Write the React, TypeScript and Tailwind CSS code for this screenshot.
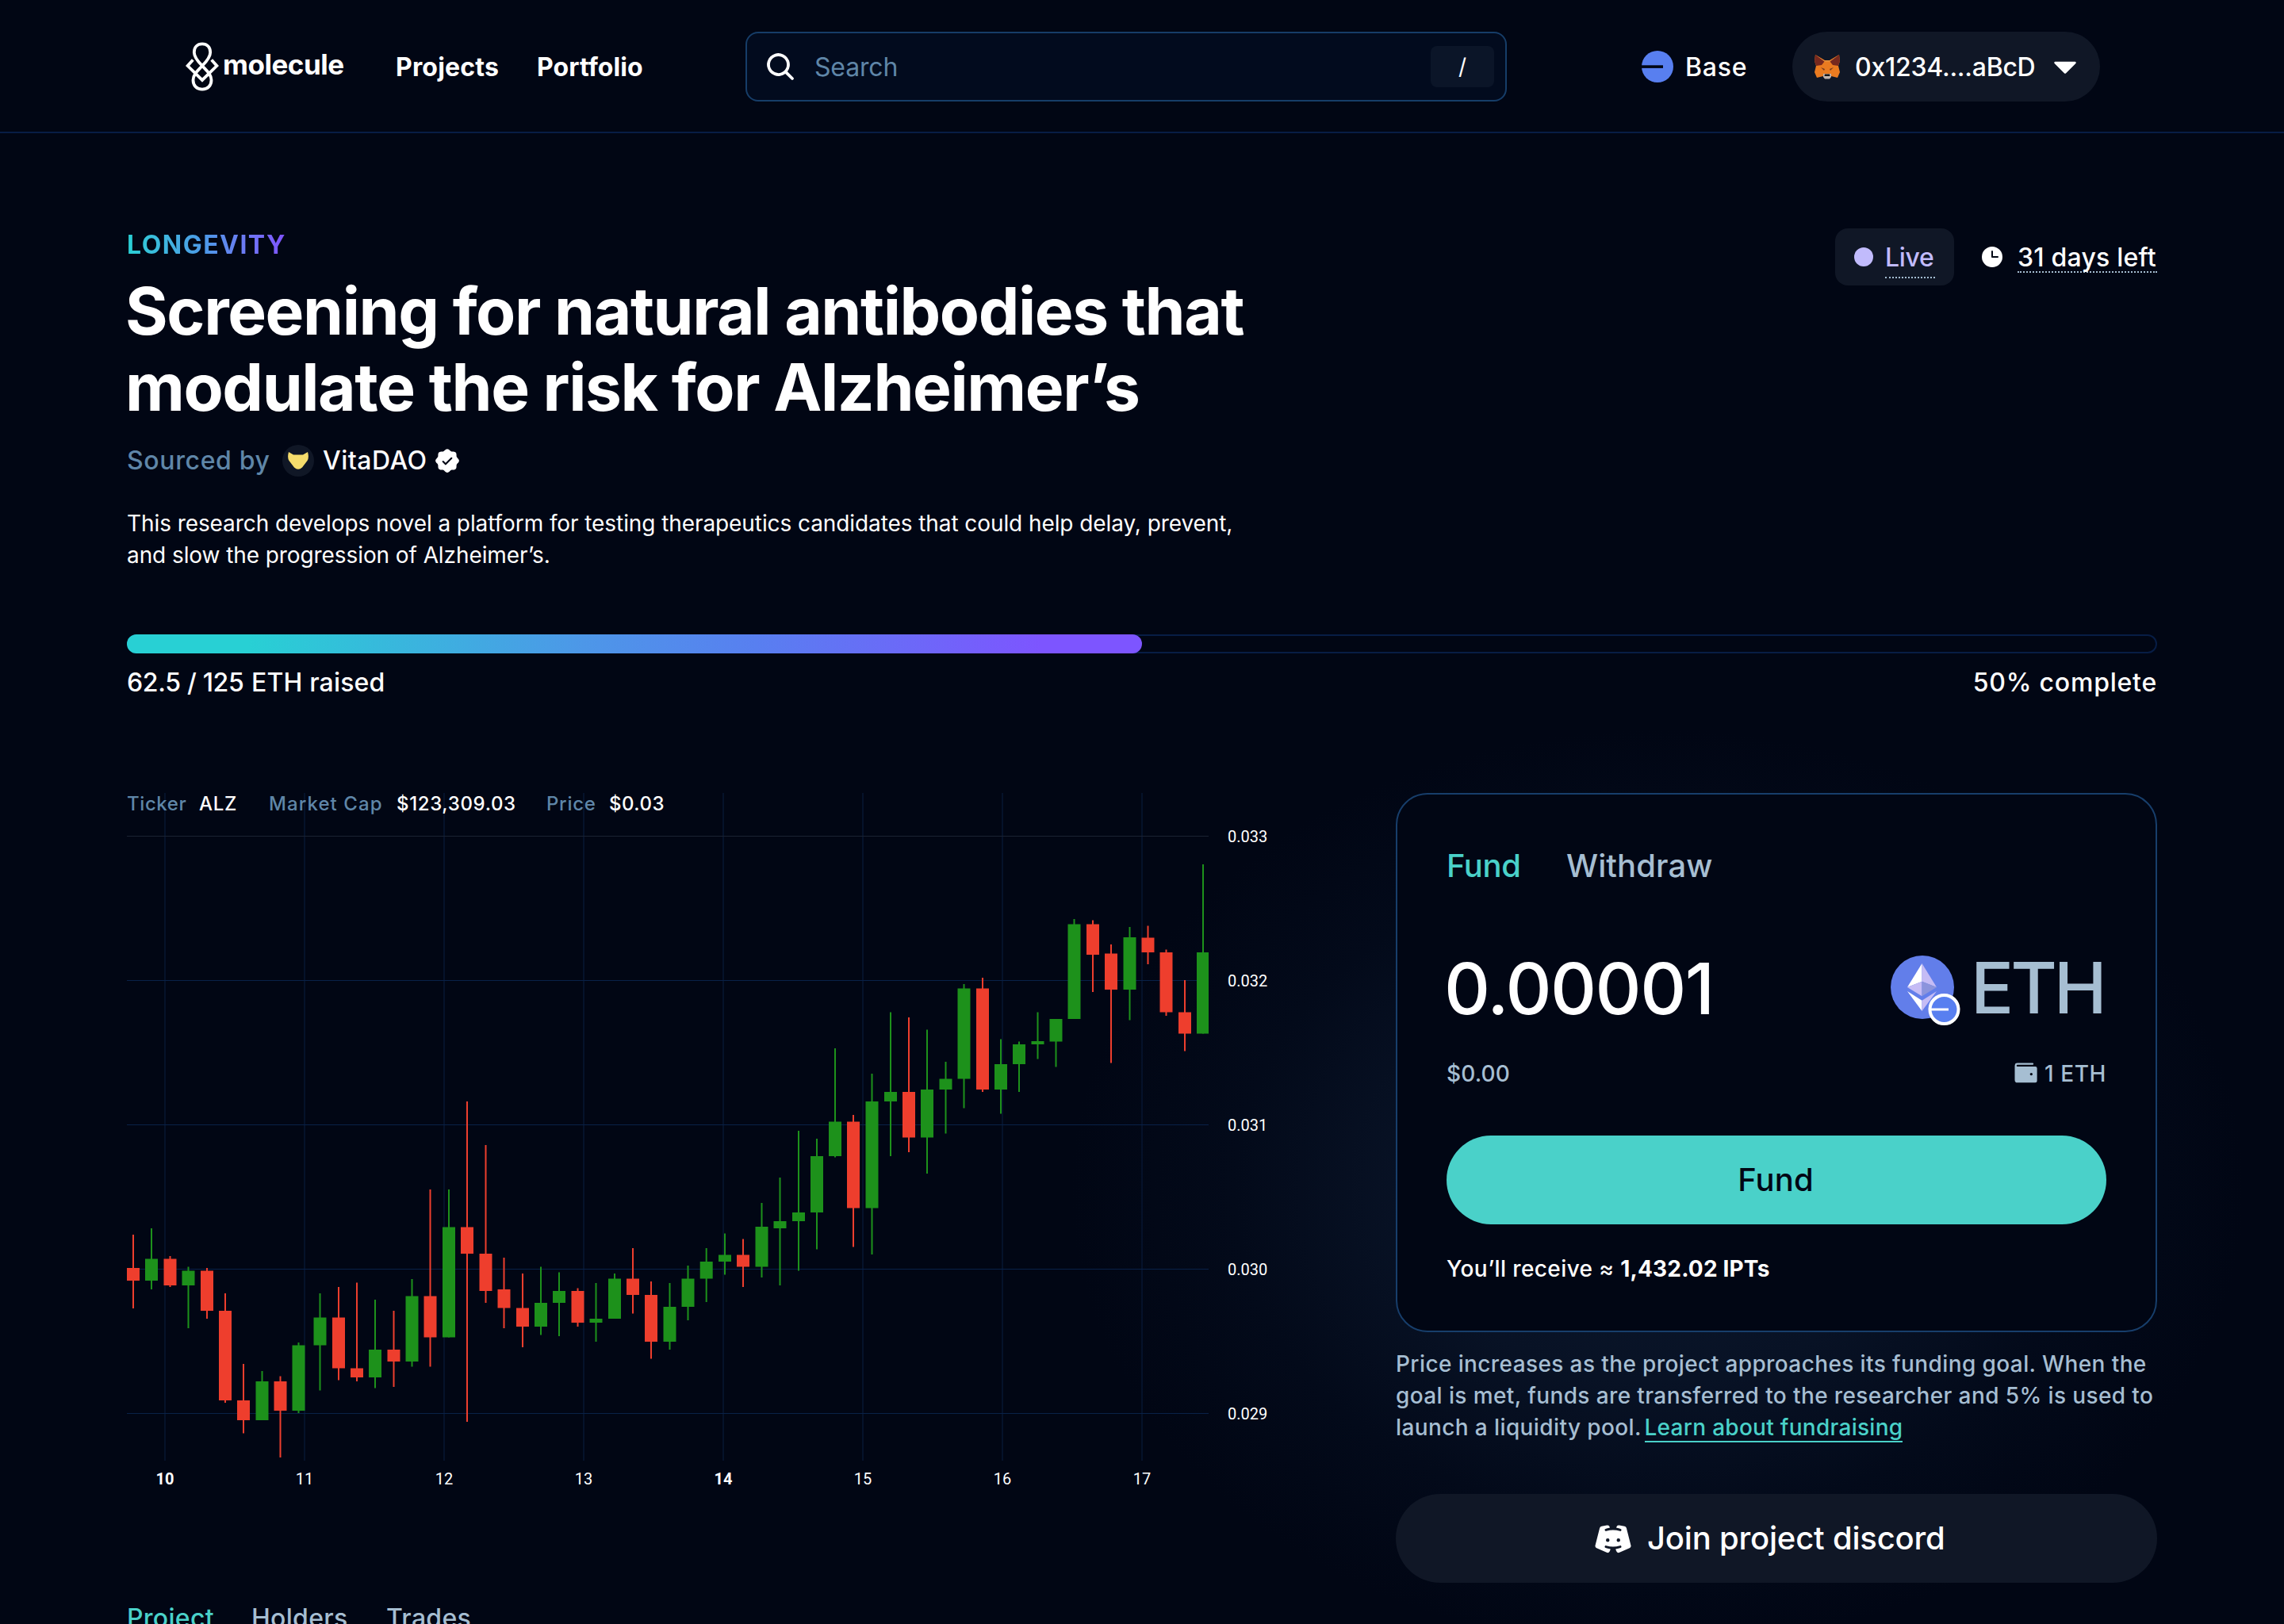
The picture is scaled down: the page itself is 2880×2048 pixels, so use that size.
import {
    PiCaretDownFill,
    PiClockFill,
    PiDiscordLogoFill,
    PiMagnifyingGlassBold,
    PiSealCheckFill,
    PiWalletFill,
} from "react-icons/pi";

type Candle = [x: number, high: number, top: number, bottom: number, low: number, up: 0 | 1];

// x centre, wick top, body top, body bottom, wick bottom, rising
const candles: Candle[] = [
    [168, 1557, 1599, 1615, 1650, 0],
    [191, 1549, 1587.5, 1615, 1626, 1],
    [214.5, 1584, 1587.5, 1621, 1623, 0],
    [237.5, 1597.5, 1602.5, 1621, 1675, 1],
    [261, 1599, 1602.5, 1653, 1663, 0],
    [284, 1631, 1653, 1766, 1769, 0],
    [307, 1720, 1766, 1791, 1807.5, 0],
    [330.5, 1729, 1742, 1791, 1791, 1],
    [353.5, 1735.5, 1742, 1779, 1838, 0],
    [376.5, 1693, 1696.5, 1779, 1782, 1],
    [403.5, 1631, 1661.5, 1696.5, 1753.5, 1],
    [427, 1623, 1661.5, 1725.5, 1740.5, 0],
    [450, 1617.5, 1725.5, 1737, 1742, 0],
    [473, 1639, 1702, 1737, 1750.5, 1],
    [496.5, 1653, 1702, 1717, 1749, 0],
    [519.5, 1613, 1634.5, 1717, 1723.5, 1],
    [542.5, 1500, 1634.5, 1686.5, 1723.5, 0],
    [566, 1500, 1547.5, 1686.5, 1686.5, 1],
    [589, 1389, 1547.5, 1581, 1793, 0],
    [612.5, 1444, 1581, 1628, 1643, 0],
    [635.5, 1586, 1626, 1649.5, 1675, 0],
    [659, 1606, 1649.5, 1673, 1699, 0],
    [682, 1597.5, 1643, 1673, 1683.5, 1],
    [705, 1604.5, 1628, 1643, 1685, 1],
    [728.5, 1624.5, 1628, 1668, 1673, 0],
    [751.5, 1618, 1663, 1668, 1692, 1],
    [775, 1606, 1612.5, 1663, 1663, 1],
    [798, 1574, 1612.5, 1633, 1656.5, 0],
    [821, 1616, 1633, 1692, 1713.5, 0],
    [844.5, 1618, 1648, 1692, 1702, 1],
    [867.5, 1596, 1612.5, 1648, 1665, 1],
    [890.7, 1574, 1591, 1612.5, 1642, 1],
    [914, 1555.5, 1582.5, 1591, 1607.5, 1],
    [937, 1562.5, 1582.5, 1597.5, 1623, 0],
    [960.5, 1517, 1547, 1597.5, 1611, 1],
    [983.5, 1485, 1540, 1549, 1621, 1],
    [1007, 1426, 1529, 1540, 1602.5, 1],
    [1030, 1436, 1458, 1529, 1575.5, 1],
    [1053, 1322, 1414.5, 1458, 1459.5, 1],
    [1076, 1406, 1414.5, 1523.5, 1572.5, 0],
    [1099.5, 1354, 1389, 1523.5, 1582, 1],
    [1123, 1276.5, 1377, 1389, 1458, 1],
    [1146, 1283, 1377, 1434.5, 1453, 0],
    [1169, 1298.5, 1374, 1434.5, 1480, 1],
    [1192.5, 1339, 1360.5, 1374, 1429.5, 1],
    [1215.5, 1241, 1246.5, 1360.5, 1397.5, 1],
    [1239, 1233, 1246.5, 1374, 1377, 0],
    [1262, 1310.5, 1342, 1374, 1404.5, 1],
    [1285, 1313.5, 1317, 1342, 1377, 1],
    [1308.5, 1276.5, 1313, 1317, 1335.5, 1],
    [1331.5, 1285, 1285, 1313.5, 1345.5, 1],
    [1354.5, 1159, 1165.5, 1285, 1285, 1],
    [1378, 1160.5, 1165.5, 1204, 1251, 0],
    [1401, 1191, 1202.5, 1248, 1340.5, 0],
    [1424.5, 1169, 1182, 1248, 1286.5, 1],
    [1447.5, 1167.5, 1182.5, 1201, 1216, 0],
    [1470.5, 1197.5, 1201, 1276.5, 1281, 0],
    [1494, 1236, 1276.5, 1303.5, 1325.5, 0],
    [1517, 1090, 1201, 1303.5, 1303.5, 1],
];

const prices = ["0.033", "0.032", "0.031", "0.030", "0.029"];
const days = ["10", "11", "12", "13", "14", "15", "16", "17"];

const MoleculeLogo = () => (
    <svg width="42" height="62" viewBox="0 0 42 62" fill="none" stroke="#fff" strokeWidth="3.8" className="shrink-0">
        <path d="M21 30C15.5 24.5 10.8 19 10.8 13C10.8 6.5 14.8 2.4 21 2.4C27.2 2.4 31.2 6.5 31.2 13C31.2 19 26.5 24.5 21 30C15 36.5 9.5 41 9.5 48C9.5 55 14 59.6 21 59.6C28 59.6 32.5 55 32.5 48C32.5 41 27 36.5 21 30Z" />
        <path d="M9.3 22.5L2.6 30L21 48L39.4 30L32.7 22.5" />
    </svg>
);

const BaseLogo = () => (
    <svg width="40" height="40" viewBox="0 0 40 40" className="shrink-0">
        <circle cx="20" cy="20" r="20" fill="#587ff0" />
        <rect x="0" y="18.3" width="27" height="3.6" fill="#010614" />
    </svg>
);

const Fox = () => (
    <svg width="34" height="32" viewBox="0 0 34 32" className="shrink-0">
        <path d="M2 1L14 8H20L32 1L33 9L31 15L33 23L30 30L22 28L20 31H14L12 28L4 30L1 23L3 15L1 9Z" fill="#ea7b20" />
        <path d="M2 1L14 9L10 14L3 15L1 9Z" fill="#76281e" />
        <path d="M32 1L20 9L24 14L31 15L33 9Z" fill="#76281e" />
        <path d="M2 1L13 8H21L32 1L20 10H14Z" fill="#e58a35" />
        <path d="M9 17L14 19L13 21Z" fill="#763a1c" />
        <path d="M25 17L20 19L21 21Z" fill="#763a1c" />
        <path d="M12 25H22V29L20 31.5H14L12 29Z" fill="#c0b4ad" />
        <path d="M14 25.5H20L20.5 28H13.5Z" fill="#161616" />
    </svg>
);

const EthLogo = () => (
    <svg width="90" height="90" viewBox="0 0 90 90" className="shrink-0">
        <circle cx="40" cy="40" r="40" fill="#627eea" />
        <path d="M39.5 10L21 40L39.5 32.7Z" fill="#fff" />
        <path d="M39.5 10L58 40L39.5 32.7Z" fill="#c5bcf5" />
        <path d="M39.5 32.7L21 40L39.5 51.3Z" fill="#c5bcf5" />
        <path d="M39.5 32.7L58 40L39.5 51.3Z" fill="#8b94dc" />
        <path d="M21 45L39.5 56.7V70Z" fill="#fff" />
        <path d="M58 45L39.5 56.7V70Z" fill="#c5bcf5" />
        <circle cx="67.5" cy="68" r="18" fill="#587ff0" stroke="#fff" strokeWidth="4" />
        <rect x="50" y="66.5" width="23" height="3" fill="#fff" />
    </svg>
);

const PriceChart = () => (
    <svg width="1480" height="880" viewBox="160 1000 1480 880" className="block" fontFamily="Roboto, sans-serif" fontSize="20" fill="#fff">
        {days.map((day, i) => (
            <g key={day}>
                <rect x={207 + i * 176} y="1000" width="2" height="842" fill="#05122a" />
                <text x={208 + i * 176} y="1872" textAnchor="middle" fontWeight={day === "10" || day === "14" ? 700 : 400}>
                    {day}
                </text>
            </g>
        ))}
        {prices.map((price, i) => (
            <g key={price}>
                <rect x="160" y={1054 + i * 182} width="1364" height="1" fill={i === 0 ? "#1b2232" : "#092148"} />
                <text x="1548" y={1061.5 + i * 182}>
                    {price}
                </text>
            </g>
        ))}
        {candles.map(([x, high, top, bottom, low, up]) => (
            <g key={x} fill={up ? "#1d911b" : "#ee3e2d"}>
                <rect x={x - 1} y={high} width="2" height={low - high} />
                <rect x={x - 8} y={top} width={x === 1517 ? 15 : 16} height={bottom - top} />
            </g>
        ))}
    </svg>
);

const Header = () => (
    <header className="flex h-[168px] items-center border-b-2 border-[#071d45] pt-0.5 pr-[232px] pl-[234px]">
        <div className="flex w-[706px] items-center">
            <MoleculeLogo />
            <span className="ml-[5px] w-[218px] pb-[5px] text-[35px] font-bold tracking-[-0.014em]">molecule</span>
            <nav className="flex pt-px text-[32px] font-bold">
                <a className="w-[178px] tracking-[0.006em]">Projects</a>
                <a className="tracking-[0.002em]">Portfolio</a>
            </nav>
        </div>
        <div className="flex h-[88px] w-[960px] items-center rounded-2xl border-2 border-[#163d68] bg-[#020b1e] pr-[14px] pl-[22px]">
            <PiMagnifyingGlassBold size={40} />
            <span className="ml-[23px] pt-px text-[32px] tracking-[-0.005em] text-[#5f86a8]">Search</span>
            <kbd className="ml-auto flex h-[52px] w-20 items-center justify-center rounded-lg bg-[#0b1528] font-[Inter] text-[28px]">/</kbd>
        </div>
        <div className="ml-auto flex items-center gap-14 text-[32px] font-medium">
            <div className="flex w-[134px] items-center">
                <BaseLogo />
                <span className="ml-[15px] pt-px tracking-[0.025em]">Base</span>
            </div>
            <div className="flex h-[88px] w-[388px] items-center rounded-full bg-[#101726] pl-[27px]">
                <Fox />
                <span className="ml-[18px] w-[245px] pt-px tracking-[-0.008em]">0x1234....aBcD</span>
                <PiCaretDownFill size={40} />
            </div>
        </div>
    </header>
);

const ProjectIntro = () => (
    <section className="flex items-start justify-between pt-[120px]">
        <div className="pt-px">
            <div className="w-[200px] bg-linear-to-r from-[#28d0d4] via-[#4d97e8] to-[#7f52ff] bg-clip-text text-[32px] leading-10 font-bold tracking-[0.046em] text-transparent">
                LONGEVITY
            </div>
            <h1 className="mt-4 -ml-[2px] text-[82px] leading-[96px] font-bold tracking-[-0.017em] whitespace-nowrap">
                Screening for natural antibodies that
                <br />
                modulate the risk for Alzheimer’s
            </h1>
            <div className="mt-6 flex h-10 items-center text-[32px] font-medium">
                <span className="w-[196px] tracking-[0.02em] text-[#5f86a8]">Sourced by</span>
                <span className="flex size-10 items-center justify-center rounded-full bg-[#101726]">
                    <svg width="28" height="24" viewBox="0 0 28 24">
                        <path d="M2 1L8 4.5H20L26 1Q28 8 25.5 12L19 20.5Q14 25 9 20.5L2.5 12Q0 8 2 1Z" fill="#f5dc6c" />
                    </svg>
                </span>
                <span className="ml-[11px] w-[140px] tracking-[0.016em]">VitaDAO</span>
                <PiSealCheckFill size={34} />
            </div>
            <p className="mt-[39px] text-[28px] leading-10 tracking-[-0.003em] whitespace-nowrap">
                This research develops novel a platform for testing therapeutics candidates that could help delay, prevent,
                <br />
                and slow the progression of Alzheimer’s.
            </p>
        </div>
        <div className="flex h-[72px] items-center text-[32px] leading-10 font-medium">
            <div className="flex h-[72px] w-[150px] items-center rounded-2xl bg-[#101726] pl-6 text-[#c1bbfc]">
                <span className="size-6 rounded-full bg-[#c1bbfc]" />
                <span className="ml-[15px] h-12 w-[63px] translate-y-[3px] border-b-2 border-dotted border-[#a5bdd1] pt-0.5 tracking-[-0.01em]">Live</span>
            </div>
            <PiClockFill size={32} className="ml-8" />
            <span className="ml-4 h-10 w-[176px] border-b-2 border-dotted border-[#a5bdd1] leading-[42px] tracking-[0.007em] whitespace-nowrap">31 days left</span>
        </div>
    </section>
);

const Progress = () => (
    <section className="mt-20">
        <div className="h-6 rounded-full border-2 border-[#071d45]">
            <div className="-m-0.5 h-6 w-[1280px] rounded-full bg-[linear-gradient(90deg,#28d0d4_0%,#28d0d4_12%,#4d97e8_45%,#587ff0_62%,#7d55ff_90%)]" />
        </div>
        <div className="mt-[17px] flex justify-between text-[32px] leading-10 font-medium">
            <span className="flex">
                <span className="w-[157px] tracking-[-0.01em]">62.5 / 125</span>
                <span className="tracking-[0.005em]">ETH raised</span>
            </span>
            <span className="tracking-[0.024em]">50% complete</span>
        </div>
    </section>
);

const FundCard = () => (
    <div className="h-[680px] rounded-[40px] border-2 border-[#173e6b] bg-[#010614] px-[62px] pt-[66px]">
        <div className="flex text-[40px] leading-[48px] font-medium">
            <span className="w-[151px] tracking-[-0.01em] text-[#4ad1c9]">Fund</span>
            <span className="tracking-[0.002em] text-[#a6bed2]">Withdraw</span>
        </div>
        <div className="mt-[82px] flex h-24 items-center text-[90px] leading-[96px] font-medium">
            <span className="-ml-[3px] pt-[2px] tracking-[-0.017em]">0.00001</span>
            <div className="ml-auto flex items-center">
                <div className="mt-2">
                    <EthLogo />
                </div>
                <span className="ml-[11px] w-[171px] tracking-[-0.046em] text-[#a6bed2]">ETH</span>
            </div>
        </div>
        <div className="mt-10 flex h-10 items-center justify-between text-[28px] leading-10 font-medium text-[#a6bed2]">
            <span className="tracking-[0.005em]">$0.00</span>
            <span className="flex items-center gap-1.5">
                <PiWalletFill size={36} />
                <span className="tracking-[0.02em]">1 ETH</span>
            </span>
        </div>
        <button className="mt-[58px] flex h-28 w-full items-center justify-center rounded-full bg-[#4ad1c9] pr-0.5 text-[40px] font-medium tracking-[0.003em] text-[#010614]">
            Fund
        </button>
        <p className="mt-9 text-[28px] leading-10 font-medium tracking-[0.014em]">
            You’ll receive ≈ <span className="font-bold tracking-[0.006em]">1,432.02 IPTs</span>
        </p>
    </div>
);

const App = () => {
    return (
        <div className="h-[2048px] w-[2880px] overflow-hidden bg-[#010614] bg-[radial-gradient(ellipse_740px_580px_at_2090px_1500px,#0c182d_0%,#081225_42%,#030a1a_72%,#010614_100%)] font-[Inter,sans-serif] text-white">
            <Header />
            <main className="px-40">
                <ProjectIntro />
                <Progress />
                <section className="mt-[119px] flex justify-between">
                    <div className="w-[1480px]">
                        <div className="relative">
                            <PriceChart />
                            <div className="absolute -top-[2px] left-0 flex text-[24px] leading-8 font-medium whitespace-nowrap">
                                <span className="w-[91px] tracking-[0.025em] text-[#5f86a8]">Ticker</span>
                                <span className="w-[88px] tracking-[0.03em]">ALZ</span>
                                <span className="w-[161px] tracking-[0.045em] text-[#5f86a8]">Market Cap</span>
                                <span className="w-[189px] tracking-[0.027em]">$123,309.03</span>
                                <span className="w-[79px] tracking-[0.03em] text-[#5f86a8]">Price</span>
                                <span className="tracking-[0.02em]">$0.03</span>
                            </div>
                        </div>
                        <div className="mt-[141px] flex text-[32px] leading-10 font-medium tracking-[0.009em] text-[#a6bed2]">
                            <span className="w-[157px] text-[#4ad1c9]">Project</span>
                            <span className="w-[170px]">Holders</span>
                            <span>Trades</span>
                        </div>
                    </div>
                    <aside className="w-[960px]">
                        <FundCard />
                        <p className="mt-5 text-[28px] leading-10 font-medium tracking-[0.014em] whitespace-nowrap text-[#a6bed2]">
                            Price increases as the project approaches its funding goal. When the
                            <br />
                            goal is met, funds are transferred to the researcher and 5% is used to
                            <br />
                            launch a liquidity pool.{" "}
                            <a className="-ml-1 border-b-2 border-[#4ad1c9] tracking-[0.01em] text-[#4ad1c9]">Learn about fundraising</a>
                        </p>
                        <button className="mt-16 flex h-28 w-full items-center rounded-full bg-[#101726] pl-[250px] text-[40px] font-medium">
                            <PiDiscordLogoFill size={48} />
                            <span className="ml-[19px] tracking-[-0.005em]">Join project discord</span>
                        </button>
                    </aside>
                </section>
            </main>
        </div>
    );
};

export default App;
